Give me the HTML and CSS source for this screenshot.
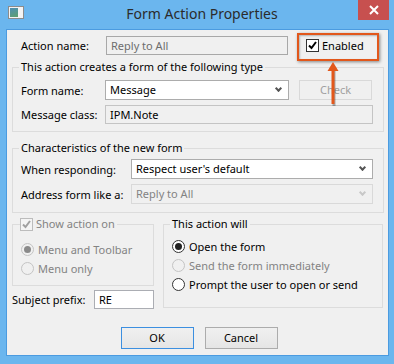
FILE: index.html
```html
<!DOCTYPE html>
<html lang="en">
  <head>
    <meta charset="UTF-8" />
    <title>Form Action Properties</title>
    <link rel="stylesheet" href="styles.css">
  </head>
  <body>
    <div class="window">
      <!-- TITLE BAR -->
      <div class="titlebar">
        <div class="app-icon"><div class="app-pic"></div></div>
        <div class="title">Form Action Properties</div>
        <div class="close-btn">
          <svg width="10" height="10" viewBox="0 0 10 10"><path d="M1 1 L9 9 M9 1 L1 9" stroke="#fff" stroke-width="2"/></svg>
        </div>
      </div>

      <!-- DIALOG BODY -->
      <div class="client">
        <div class="row top-row">
          <span class="label w-action">Action name:</span>
          <div class="field disabled w-action-field">Reply to All</div>
          <label class="check enabled-check">
            <span class="box"><svg width="11" height="11" viewBox="0 0 11 11"><path d="M2 5.5 L4.5 8 L9 2" stroke="#000" stroke-width="2" fill="none"/></svg></span>
            Enabled
          </label>
        </div>

        <fieldset class="group g-type">
          <legend>This action creates a form of the following type</legend>
          <div class="row">
            <span class="label w-form">Form name:</span>
            <div class="select w-form-select">Message<span class="chev"></span></div>
            <div class="btn disabled-btn w-check">Check</div>
          </div>
          <div class="row gap5">
            <span class="label w-form">Message class:</span>
            <div class="field readonly w-class">IPM.Note</div>
          </div>
        </fieldset>

        <fieldset class="group g-chars">
          <legend>Characteristics of the new form</legend>
          <div class="row">
            <span class="label w-resp">When responding:</span>
            <div class="select w-resp-select">Respect user's default<span class="chev"></span></div>
          </div>
          <div class="row gap5">
            <span class="label w-resp">Address form like a:</span>
            <div class="select disabled w-resp-select">Reply to All<span class="chev"></span></div>
          </div>
        </fieldset>

        <div class="bottom">
          <div class="col-left">
            <fieldset class="group g-show">
              <legend>
                <span class="check off">
                  <span class="box"><svg width="11" height="11" viewBox="0 0 11 11"><path d="M2 5.5 L4.5 8 L9 2" stroke="#a0a0a0" stroke-width="2" fill="none"/></svg></span>
                  Show action on
                </span>
              </legend>
              <div class="radio off"><span class="dot on"></span>Menu and Toolbar</div>
              <div class="radio off r-gap"><span class="dot"></span>Menu only</div>
            </fieldset>
            <div class="row subject">
              <span class="label w-subj">Subject prefix:</span>
              <div class="field w-subj-field">RE</div>
            </div>
          </div>

          <fieldset class="group g-will">
            <legend>This action will</legend>
            <div class="radio"><span class="dot on"></span>Open the form</div>
            <div class="radio off r-gap"><span class="dot"></span>Send the form immediately</div>
            <div class="radio r-gap"><span class="dot"></span>Prompt the user to open or send</div>
          </fieldset>
        </div>

        <div class="buttons">
          <div class="btn default w-ok">OK</div>
          <div class="btn w-ok">Cancel</div>
        </div>

        <!-- annotation over the Enabled checkbox -->
        <div class="callout"></div>
        <svg class="arrow" width="20" height="46" viewBox="0 0 20 46">
          <path d="M11 10 L11 45" stroke="rgba(0,0,0,0.3)" stroke-width="3"/>
          <path d="M10 1 L15.5 10 L4.5 10 Z" fill="#e2571b"/>
          <path d="M10 8 L10 43" stroke="#e2571b" stroke-width="3"/>
        </svg>
      </div>
    </div>
  </body>
</html>
```

FILE: styles.css
```css
* {
  box-sizing: border-box;
}
body {
  margin: 0;
  font-family: "Noto Sans", "Open Sans", sans-serif;
  font-size: 11px;
  color: #000;
}

/* WINDOW FRAME */
.window {
  width: 394px;
  height: 364px;
  background: #6bb6ee;
  overflow: hidden;
}
.titlebar {
  height: 29px;
  display: flex;
  align-items: flex-start;
  position: relative;
}
.app-icon {
  width: 16px;
  height: 13px;
  margin: 6px 0 0 8px;
  border: 1px solid #8c8c8c;
  background: #f4f4f4;
  padding: 1px;
}
.app-pic {
  width: 8px;
  height: 9px;
  background: linear-gradient(160deg, #4d8fb5, #5fa06d);
}
.title {
  flex: 1;
  text-align: center;
  font-size: 14px;
  line-height: 28px;
  color: #2b2b2b;
  margin-left: 22px;
}
.close-btn {
  width: 31px;
  height: 20px;
  margin-right: 5px;
  background: #c7504f;
  display: flex;
  align-items: center;
  justify-content: center;
}

/* DIALOG BODY */
.client {
  position: relative;
  height: 327px;
  margin: 0 5px 0 6px;
  border: 1px solid #4b9be0;
  background: #f0f0f0;
  padding: 6px 4px 0 5px;
}
.row {
  display: flex;
  align-items: center;
}
.gap5 {
  margin-top: 5px;
}
.top-row {
  margin-left: 9px;
  height: 19px;
}
.label {
  white-space: nowrap;
}
.w-action { width: 85px; }
.w-action-field { width: 182px; }
.w-form { width: 84px; }
.w-form-select { width: 184px; }
.w-check { width: 73px; margin-left: 10px; }
.w-class { width: 268px; }
.w-resp { width: 110px; }
.w-resp-select { width: 242px; }
.w-subj { width: 82px; }
.w-subj-field { width: 60px; }
.w-ok { width: 73px; }

/* INPUTS */
.field,
.select {
  height: 19px;
  line-height: 17px;
  border: 1px solid #abadb3;
  background: #fff;
  padding: 0 4px;
  white-space: nowrap;
}
.field.disabled {
  color: #6d6d6d;
  border-color: #a8a8a8;
  background: #f0f0f0;
}
.field.readonly {
  background: #f0f0f0;
  border-color: #c4c4c4;
}
.select {
  height: 20px;
  line-height: 18px;
  border-color: #acacac;
  position: relative;
}
.select.disabled {
  color: #838383;
  border-color: #d9d9d9;
  background: #f0f0f0;
}
.chev {
  position: absolute;
  right: 7px;
  top: 5px;
  width: 5px;
  height: 5px;
  border-right: 2px solid #555;
  border-bottom: 2px solid #555;
  transform: rotate(45deg);
}
.select.disabled .chev {
  border-color: #c8c8c8;
}

/* BUTTONS */
.btn {
  height: 22px;
  line-height: 20px;
  text-align: center;
  border: 1px solid #acacac;
  background: linear-gradient(#f0f0f0, #e5e5e5);
}
.btn.default {
  border-color: #3c8fe0;
}
.disabled-btn {
  height: 20px;
  line-height: 18px;
  color: #a0a0a0;
  border-color: #d9d9d9;
  background: #f0f0f0;
}
.buttons {
  display: flex;
  justify-content: center;
  gap: 11px;
  margin-top: 18px;
  padding-left: 2px;
}

/* GROUP BOXES */
.group {
  margin: 0;
  border: 1px solid #dcdcdc;
  padding: 0 10px 6px 8px;
  min-width: 0;
}
.group legend {
  padding: 0 2px;
  margin-left: -2px;
  line-height: 16px;
}
.g-type {
  margin-top: 4px;
  padding-top: 5px;
  padding-bottom: 7px;
}
.g-chars {
  margin-top: 8px;
  padding-top: 3px;
  padding-bottom: 8px;
}
.bottom {
  display: flex;
  margin-top: 3px;
  align-items: flex-start;
}
.col-left {
  width: 142px;
}
.g-show {
  padding-top: 9px;
  padding-bottom: 9px;
}
.g-show legend {
  margin-left: -1px;
  padding: 0 2px 0 0;
}
.g-will {
  width: 220px;
  margin-left: 9px;
  padding-top: 6px;
  padding-bottom: 15px;
  padding-left: 8px;
}
.subject {
  margin-top: 4px;
}

/* CHECKBOXES AND RADIOS */
.check {
  display: flex;
  align-items: center;
  white-space: nowrap;
}
.box {
  width: 13px;
  height: 13px;
  border: 1px solid #333;
  background: #fff;
  margin-right: 3px;
  display: flex;
  align-items: center;
  justify-content: center;
}
.enabled-check {
  margin-left: 18px;
}
.check.off {
  color: #838383;
}
.check.off .box {
  border-color: #bcbcbc;
  background: #f4f4f4;
}
.radio {
  display: flex;
  align-items: center;
  height: 16px;
  white-space: nowrap;
}
.r-gap {
  margin-top: 3px;
}
.dot {
  width: 13px;
  height: 13px;
  border-radius: 50%;
  border: 1px solid #333;
  background: #fff;
  margin-right: 4px;
  display: flex;
  align-items: center;
  justify-content: center;
}
.dot.on::after {
  content: "";
  width: 7px;
  height: 7px;
  border-radius: 50%;
  background: #222;
}
.radio.off {
  color: #838383;
}
.radio.off .dot {
  border-color: #c4c4c4;
  background: #f0f0f0;
}
.radio.off .dot.on::after {
  background: #8a8a8a;
}

/* ANNOTATION */
.callout {
  position: absolute;
  left: 290px;
  top: 3px;
  width: 82px;
  height: 28px;
  border: 2px solid #e2571b;
  box-shadow: 1px 1px 3px rgba(0, 0, 0, 0.45), inset 1px 1px 2px rgba(0, 0, 0, 0.25);
}
.arrow {
  position: absolute;
  left: 316px;
  top: 31px;
}
```
